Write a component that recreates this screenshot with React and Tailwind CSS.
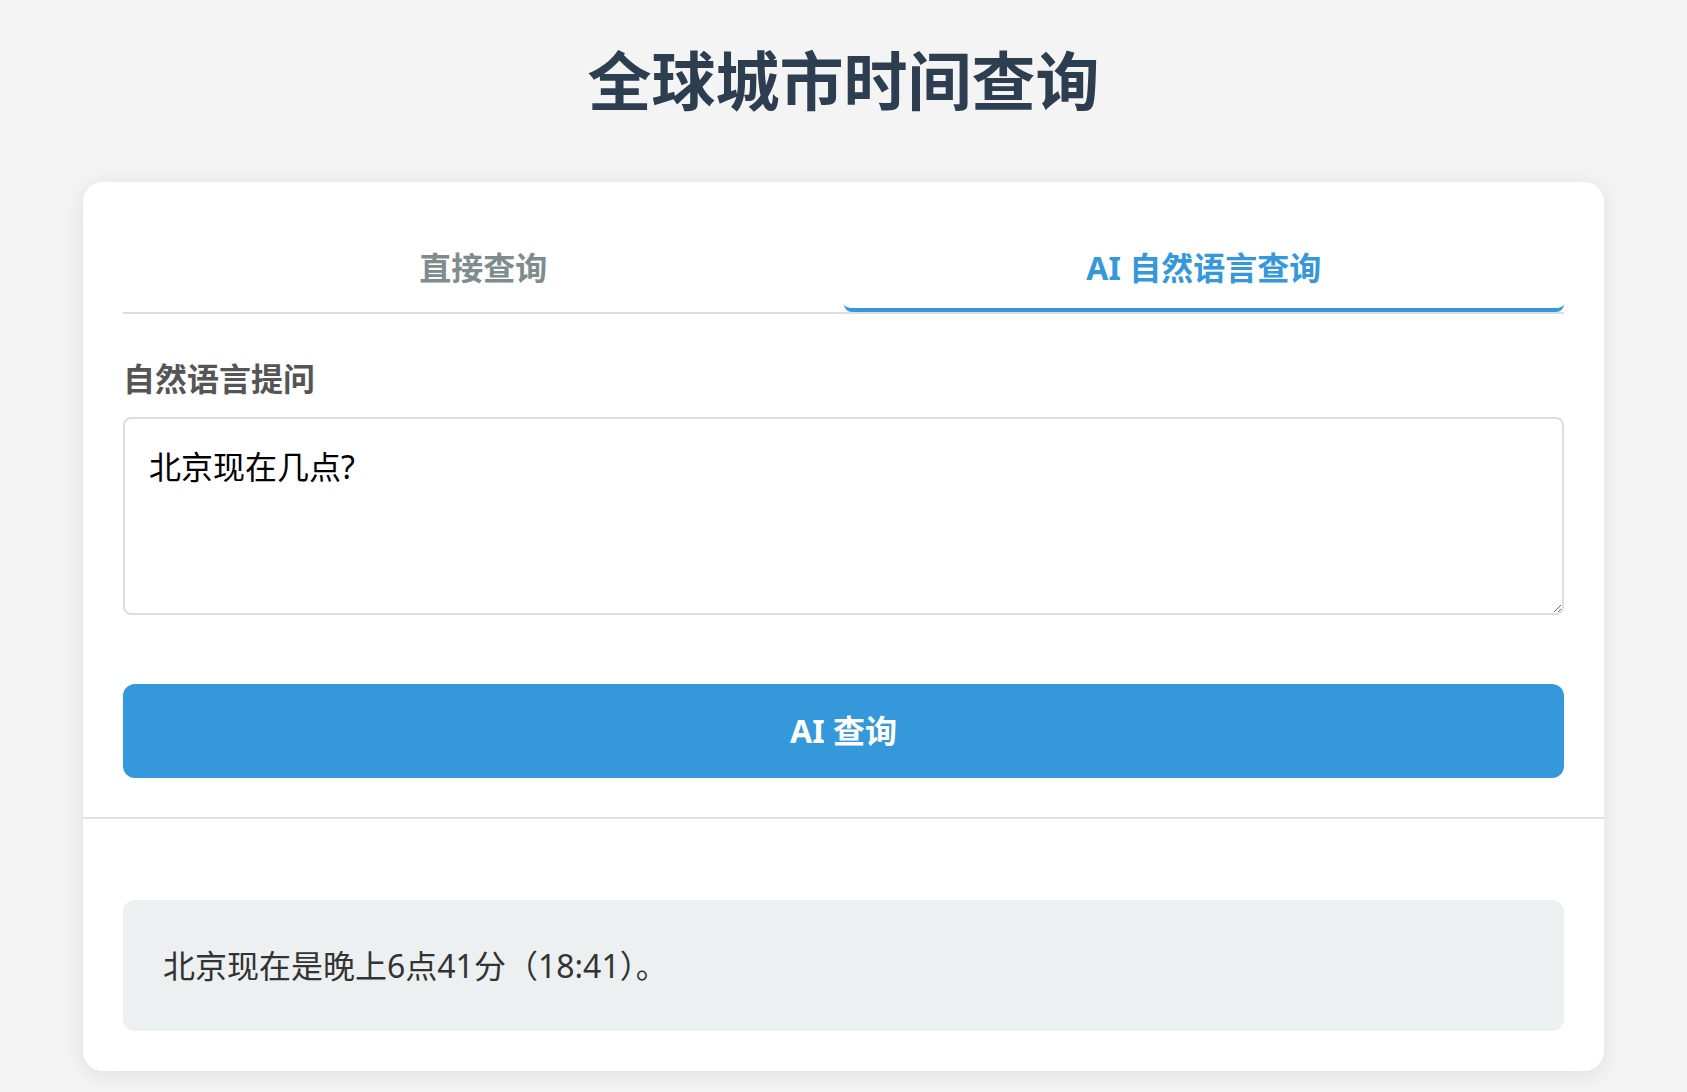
import React, { useState } from "react";

const App = () => {
  const [tab, setTab] = useState("ai");
  const [question, setQuestion] = useState("北京现在几点?");

  const tabClass = (active) =>
    active
      ? "flex-1 pt-[27px] pb-[21px] text-[32px] leading-[38px] font-bold text-[#3498db] border-b-4 border-[#3498db] rounded-b-[8px]"
      : "flex-1 pt-[27px] pb-[21px] text-[32px] leading-[38px] font-bold text-[#7f8c8d] border-b-4 border-transparent";

  return (
    <div
      className="min-h-screen bg-[#f4f4f4] px-[83px] pt-[42px] pb-[20px]"
      style={{ fontFamily: '"Noto Sans", "Noto Sans CJK SC", sans-serif' }}
    >
      {/* Page title */}
      <h1 className="text-center text-[64px] leading-[77px] font-bold text-[#2c3e50] mb-[63px]">
        全球城市时间查询
      </h1>

      {/* Main card */}
      <div className="bg-white rounded-[20px] shadow-[0_4px_24px_rgba(0,0,0,0.09)]">
        <div className="px-[40px] pt-[40px] pb-[39px] border-b-2 border-[#e2e2e2]">
          {/* Tabs */}
          <div className="flex border-b-2 border-[#dddddd]">
            <button className={tabClass(tab === "direct")} onClick={() => setTab("direct")}>
              直接查询
            </button>
            <button className={tabClass(tab === "ai")} onClick={() => setTab("ai")}>
              AI 自然语言查询
            </button>
          </div>

          {/* Form */}
          <label className="block mt-[46px] mb-[19px] text-[32px] leading-[38px] font-bold text-[#555555]">
            自然语言提问
          </label>
          <textarea
            value={question}
            onChange={(e) => setQuestion(e.target.value)}
            className="block w-full h-[198px] border-2 border-[#dddddd] rounded-[8px] p-[24px] text-[32px] leading-[48px] text-black focus:outline-none"
          />
          <button className="mt-[69px] w-full h-[94px] rounded-[12px] bg-[#3498db] text-white text-[32px] font-bold">
            AI 查询
          </button>
        </div>

        {/* Result */}
        <div className="px-[40px] pt-[81px] pb-[40px]">
          <div className="bg-[#ecf0f1] rounded-[12px] p-[40px] text-[32px] leading-[51px] text-[#333333]">
            北京现在是晚上6点41分（18:41）。
          </div>
        </div>
      </div>
    </div>
  );
};

export default App;
